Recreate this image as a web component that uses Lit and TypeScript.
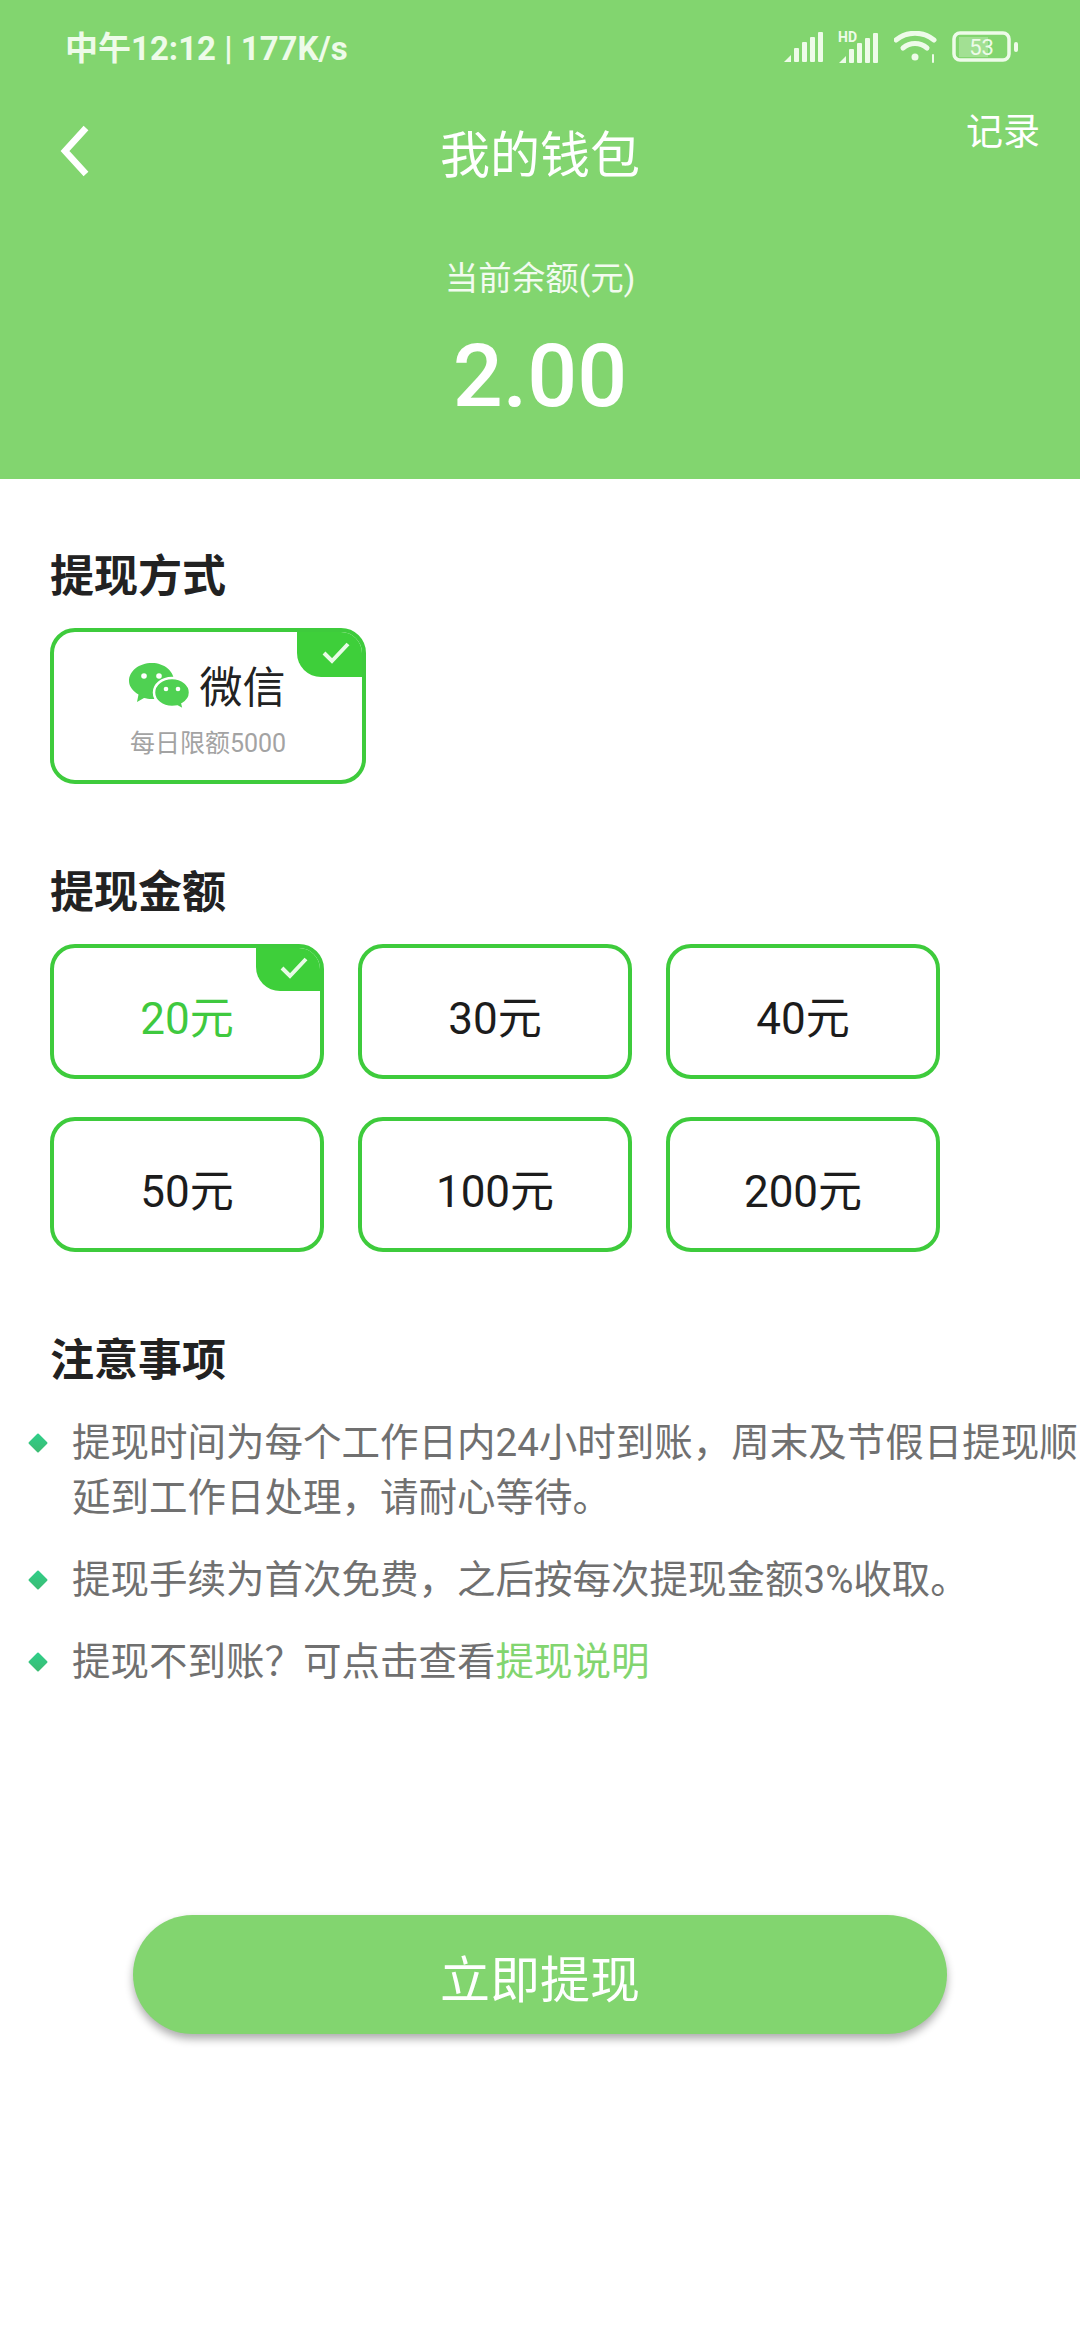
import { LitElement, html, css, svg } from "lit";
import { customElement, state } from "lit/decorators.js";

const amounts = [20, 30, 40, 50, 100, 200];

const signalBars = svg`
  <path d="M0 30 L7 23 V30 Z" />
  <rect x="10" y="16" width="5" height="14" rx="1" />
  <rect x="18" y="10" width="5" height="20" rx="1" />
  <rect x="26" y="5" width="5" height="25" rx="1" />
  <rect x="34" y="0" width="5" height="30" rx="1" />
`;

const checkMark = html`
  <svg class="check" viewBox="0 0 30 24" width="30" height="24" fill="none">
    <path d="M3 12 L11 20 L27 3" stroke="#e8fbe6" stroke-width="4" />
  </svg>
`;

@customElement("app-root")
export class AppRoot extends LitElement {
  static styles = css`
    :host {
      display: block;
      width: 1080px;
      height: 2340px;
      background: #fff;
      overflow: hidden;
      font-family: Roboto, "Noto Sans CJK SC", sans-serif;
    }

    .header {
      height: 479px;
      background: #82d56f;
      color: #fff;
      text-align: center;
    }

    .status {
      height: 94px;
      padding: 0 60px 0 65px;
      display: flex;
      align-items: center;
      justify-content: space-between;
      color: #eefbe9;
    }

    .status-text {
      font-size: 33px;
      font-weight: 700;
      white-space: nowrap;
      margin-top: -2px;
    }

    .status-icons {
      display: flex;
      align-items: center;
      gap: 14px;
    }

    .status-icons svg {
      display: block;
    }

    .nav {
      height: 122px;
      padding: 0 40px;
      display: grid;
      grid-template-columns: 1fr auto 1fr;
      align-items: center;
    }

    .back {
      display: block;
      margin: -9px 0 0 20px;
    }

    .nav-title {
      font-size: 50px;
      line-height: 62px;
      font-weight: 400;
      padding-top: 2px;
    }

    .record {
      justify-self: end;
      align-self: start;
      margin-top: 12px;
      font-size: 37px;
      line-height: 54px;
    }

    .balance-label {
      margin-top: 40px;
      font-size: 33.5px;
      line-height: 46px;
      color: #f2fbef;
    }

    .balance {
      margin-top: 24px;
      font-size: 88px;
      line-height: 100px;
      font-weight: 500;
    }

    .body {
      padding: 68px 0 0 50px;
    }

    .section-title {
      font-size: 44px;
      line-height: 60px;
      font-weight: 700;
      color: #222;
    }

    .section-title.spaced {
      margin-top: 79px;
    }

    .option {
      position: relative;
      box-sizing: border-box;
      border: 4px solid #3ecb3c;
      border-radius: 25px;
      background: #fff;
      overflow: hidden;
    }

    .badge {
      position: absolute;
      top: -4px;
      right: -4px;
      box-sizing: border-box;
      padding-left: 8px;
      display: flex;
      align-items: center;
      justify-content: center;
      background: #3ecf3a;
      border-bottom-left-radius: 24px;
    }

    .method {
      width: 316px;
      height: 156px;
      margin-top: 21px;
      display: flex;
      flex-direction: column;
      align-items: center;
    }

    .method .badge {
      width: 69px;
      height: 49px;
    }

    .method-name {
      margin: 26px 0 0 -2px;
      display: flex;
      align-items: center;
      gap: 9px;
      font-size: 43px;
      line-height: 60px;
      color: #222;
    }

    .method-limit {
      margin-top: 8px;
      font-size: 25px;
      line-height: 36px;
      color: #a3a3a3;
    }

    .amounts {
      margin-top: 21px;
      display: grid;
      grid-template-columns: repeat(3, 274px);
      grid-auto-rows: 135px;
      gap: 38px 34px;
    }

    .amount {
      padding: 7px 0 0;
      display: flex;
      align-items: center;
      justify-content: center;
      font-size: 44px;
      color: #1c1c1c;
      cursor: pointer;
    }

    .amount.selected {
      color: #3fc93f;
    }

    .amount .badge {
      width: 68px;
      height: 47px;
    }

    .notes {
      list-style: none;
      margin: 24px 0 0 -21px;
      padding: 0;
      display: flex;
      flex-direction: column;
      gap: 27px;
      font-size: 38.5px;
      line-height: 55px;
      color: #707070;
    }

    .notes li {
      display: flex;
      gap: 25px;
    }

    .diamond {
      flex: none;
      width: 14px;
      height: 14px;
      margin: 21px 2px 0;
      border-radius: 1px;
      transform: rotate(45deg);
      background: linear-gradient(135deg, #2ecf8a, #3dbb72);
    }

    .link {
      color: #82d56f;
    }

    .submit {
      display: block;
      width: 814px;
      height: 119px;
      margin: 226px 0 0 83px;
      padding: 3px 0 0;
      border: none;
      border-radius: 60px;
      background: #82d56f;
      box-shadow: 0 5px 9px rgba(0, 0, 0, 0.32);
      color: #fff;
      font: inherit;
      font-size: 50px;
    }
  `;

  @state() selected = 20;

  renderStatusIcons() {
    return html`
      <div class="status-icons">
        <svg width="40" height="30" viewBox="0 0 40 30" fill="#eefbe9">${signalBars}</svg>
        <svg width="42" height="40" viewBox="0 -4 42 40" fill="#eefbe9">
          <text x="0" y="11" font-size="14" font-weight="700" font-family="Roboto, sans-serif">HD</text>
          <g transform="translate(1 2)">${signalBars}</g>
        </svg>
        <svg width="44" height="32" viewBox="0 0 44 32" fill="none" stroke="#eefbe9" stroke-linecap="round">
          <path d="M2 9 C13 0 29 0 40 9" stroke-width="5" />
          <path d="M9 17 C16 11 26 11 33 17" stroke-width="5" />
          <circle cx="21" cy="26" r="3.500" fill="#eefbe9" stroke="none" />
          <path d="M39 24 V31" stroke-width="2" />
        </svg>
        <svg width="68" height="32" viewBox="0 0 68 32">
          <rect x="7" y="6" width="29" height="20" fill="#eefbe9" opacity="0.3" />
          <rect x="2" y="2" width="55" height="27" rx="6" fill="none" stroke="#eefbe9" stroke-width="3.500" />
          <rect x="62" y="11" width="4" height="10" rx="2" fill="#eefbe9" />
          <text x="29.500" y="24" text-anchor="middle" font-size="22" font-family="Roboto, sans-serif" fill="#eefbe9">53</text>
        </svg>
      </div>
    `;
  }

  renderWechatIcon() {
    return html`
      <svg width="62" height="50" viewBox="0 0 62 50">
        <path d="M23 0 C35 0 45 8 45 18 C45 28 35 36 23 36 C20 36 17 35.500 15 35 L8 39 L9.500 31.500 C4 28 0 23.500 0 18 C0 8 10 0 23 0 Z" fill="#4fd152" />
        <circle cx="15" cy="13" r="2.800" fill="#fff" />
        <circle cx="30" cy="13" r="2.800" fill="#fff" />
        <path d="M43 15 C53 15 61 21.500 61 29.500 C61 34.500 58 38.500 53.500 41 L55 47 L48.500 43.500 C46.500 44 45 44 43 44 C33 44 25 37.500 25 29.500 C25 21.500 33 15 43 15 Z" fill="#4fd152" stroke="#fff" stroke-width="2.500" />
        <circle cx="37" cy="26" r="2.300" fill="#fff" />
        <circle cx="49" cy="26" r="2.300" fill="#fff" />
      </svg>
    `;
  }

  render() {
    return html`
      <div class="header">
        <div class="status">
          <span class="status-text">中午12:12 | 177K/s</span>
          ${this.renderStatusIcons()}
        </div>
        <div class="nav">
          <svg class="back" width="30" height="52" viewBox="0 0 30 52" fill="none">
            <path d="M26 3 L5 26 L26 49" stroke="#fff" stroke-width="6.500" />
          </svg>
          <div class="nav-title">我的钱包</div>
          <div class="record">记录</div>
        </div>
        <div class="balance-label">当前余额(元)</div>
        <div class="balance">2.00</div>
      </div>

      <div class="body">
        <div class="section-title">提现方式</div>
        <div class="option method">
          <div class="badge">${checkMark}</div>
          <div class="method-name">${this.renderWechatIcon()}<span>微信</span></div>
          <div class="method-limit">每日限额5000</div>
        </div>

        <div class="section-title spaced">提现金额</div>
        <div class="amounts">
          ${amounts.map(
            (a) => html`
              <div
                class="option amount ${a === this.selected ? "selected" : ""}"
                @click=${() => (this.selected = a)}
              >
                ${a === this.selected ? html`<div class="badge">${checkMark}</div>` : ""}
                ${a}元
              </div>
            `
          )}
        </div>

        <div class="section-title spaced">注意事项</div>
        <ul class="notes">
          <li>
            <span class="diamond"></span>
            <span>提现时间为每个工作日内24小时到账，周末及节假日提现顺延到工作日处理，请耐心等待。</span>
          </li>
          <li>
            <span class="diamond"></span>
            <span>提现手续为首次免费，之后按每次提现金额3%收取。</span>
          </li>
          <li>
            <span class="diamond"></span>
            <span>提现不到账？可点击查看<span class="link">提现说明</span></span>
          </li>
        </ul>

        <button class="submit">立即提现</button>
      </div>
    `;
  }
}

declare global {
  interface HTMLElementTagNameMap {
    "app-root": AppRoot;
  }
}
